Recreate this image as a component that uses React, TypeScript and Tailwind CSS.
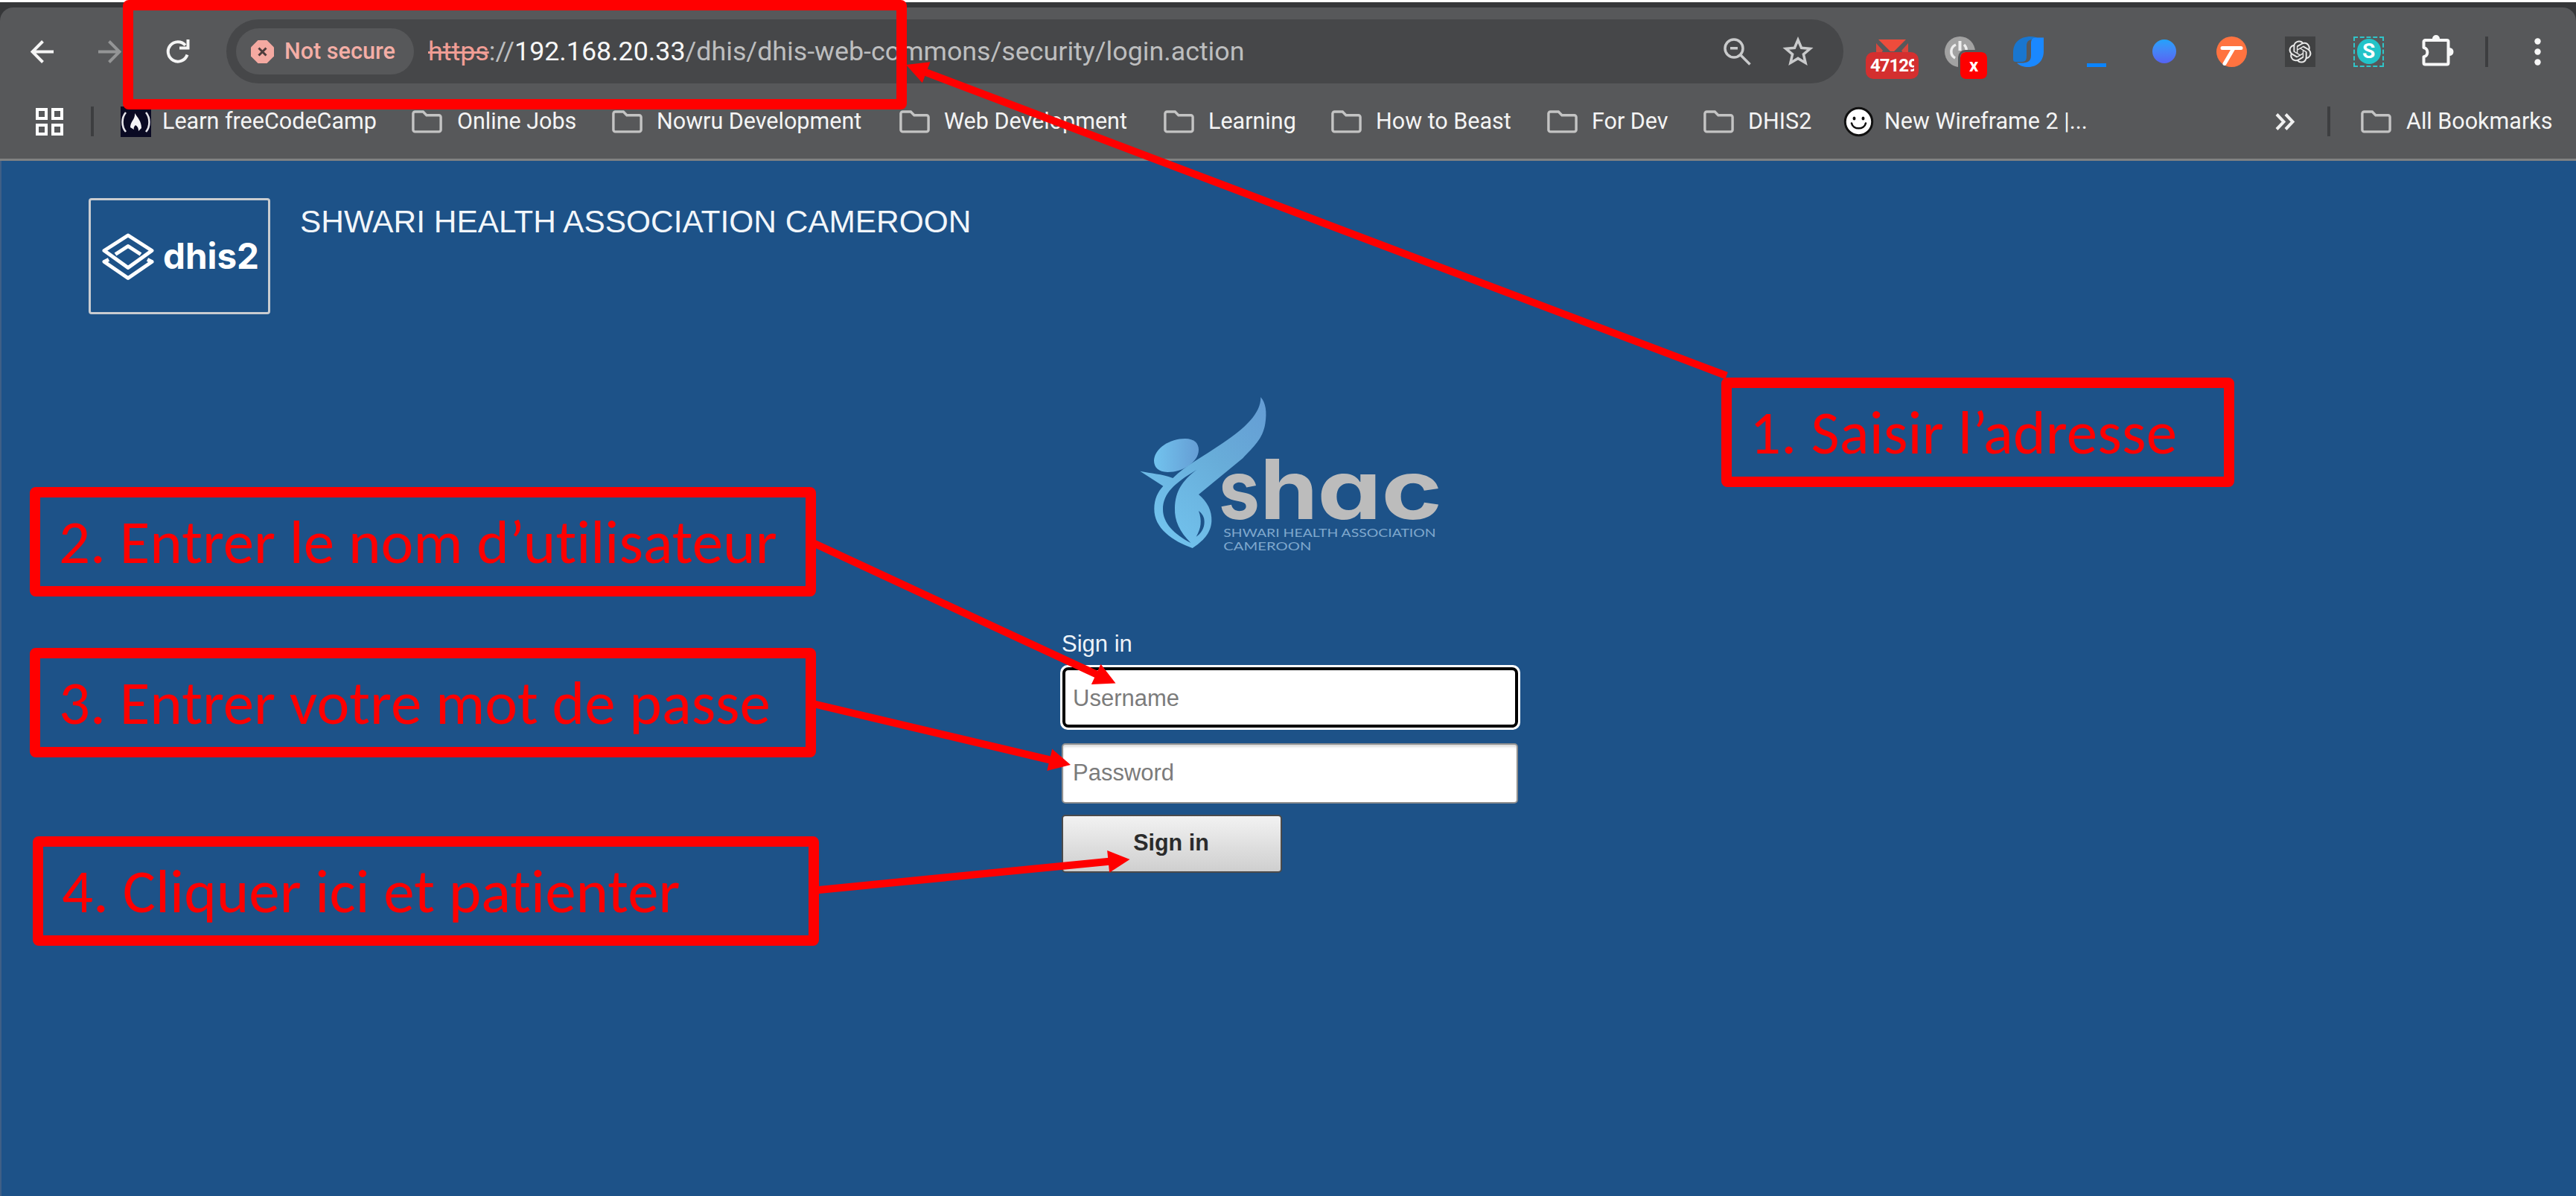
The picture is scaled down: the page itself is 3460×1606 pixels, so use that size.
import type { ReactNode } from "react";

const ROBOTO = "font-['Roboto',sans-serif]";
const ARIAL = "font-['Liberation_Sans',Arial,sans-serif]";

function FolderIcon() {
  return (
    <svg className="h-[31px] w-[41px] shrink-0" viewBox="0 0 41 31" fill="none">
      <path
        d="M4.5 2h10.8l4.6 4.7h16.6a2.6 2.6 0 0 1 2.6 2.6v17a2.6 2.6 0 0 1-2.6 2.6h-32a2.6 2.6 0 0 1-2.6-2.6V4.6A2.6 2.6 0 0 1 4.5 2Z"
        stroke="#c4c4c4"
        strokeWidth="3.4"
      />
    </svg>
  );
}

function CampIcon() {
  return (
    <svg className="h-[41px] w-[41px] shrink-0" viewBox="0 0 41 41" fill="none">
      <rect width="41" height="41" fill="#0a0a23" />
      <path d="M7 8C1 15 1 27 7 34M34 8c6 7 6 19 0 26" stroke="#e6e6ea" strokeWidth="2.6" />
      <path d="M19 9c4 6 9 11 9 20l-4 4c0-4-1-6-4-8-2 2-3 4-2 6l-5-3c0-8 7-11 6-19Z" fill="#f4f4f6" />
    </svg>
  );
}

function SmileyIcon() {
  return (
    <svg className="h-[41px] w-[41px] shrink-0" viewBox="0 0 41 41" fill="none">
      <circle cx="20.500" cy="20.500" r="18.200" fill="#fff" stroke="#111" strokeWidth="3" />
      <ellipse cx="14.500" cy="16" rx="2" ry="2.600" fill="#111" />
      <ellipse cx="26.500" cy="16" rx="2" ry="2.600" fill="#111" />
      <path d="M11 22.500c2 9 17 9 19 0" stroke="#111" strokeWidth="2.600" strokeLinecap="round" />
    </svg>
  );
}

function AppsGridIcon() {
  return (
    <svg className="h-[37px] w-[37px]" viewBox="0 0 37 37" fill="none" stroke="#fff" strokeWidth="4">
      <rect x="2" y="2" width="12" height="12" />
      <rect x="23" y="2" width="12" height="12" />
      <rect x="2" y="23" width="12" height="12" />
      <rect x="23" y="23" width="12" height="12" />
    </svg>
  );
}

function Bookmark({ icon, children, className }: { icon: ReactNode; children: ReactNode; className: string }) {
  return (
    <div className={`flex shrink-0 items-center whitespace-nowrap ${className}`}>
      {icon}
      <span>{children}</span>
    </div>
  );
}

function Toolbar() {
  return (
    <div className="flex h-[118px] items-center pl-[41px]">
      <svg className="h-[31px] w-[31px]" viewBox="0 0 31 31" fill="none" stroke="#f5f5f5" strokeWidth="4">
        <path d="M31 15.500H3.500M16.500 1.500l-14 14 14 14" />
      </svg>
      <svg className="ml-[60px] h-[31px] w-[31px]" viewBox="0 0 31 31" fill="none" stroke="#949596" strokeWidth="4">
        <path d="M0 15.500h27.500M14.500 1.500l14 14-14 14" />
      </svg>
      <svg className="ml-[60px] h-[32px] w-[32px]" viewBox="0 0 32 32" fill="none">
        <path d="M28.500 20.500A13.200 13.200 0 1 1 26 7.800" stroke="#f5f5f5" strokeWidth="4" />
        <path d="M31.500 0v13.500H18v-4h9.500V0Z" fill="#f5f5f5" />
      </svg>

      <div className="ml-[49px] flex h-[86px] w-[2172px] shrink-0 items-center rounded-full bg-[#464749] pl-[13px]">
        <div className="flex h-[62px] w-[239px] items-center gap-[14px] rounded-full bg-[#57585a] pl-[20px]">
          <svg className="h-[31px] w-[31px]" viewBox="0 0 31 31">
            <path d="M9.500 0h12L31 9.500v12L21.500 31h-12L0 21.500v-12Z" fill="#f4a9a1" />
            <path d="M10.500 10.500l10 10M20.500 10.500l-10 10" stroke="#4d3b3b" strokeWidth="3" />
          </svg>
          <span className="mt-px whitespace-nowrap text-[30.600px] font-medium leading-none text-[#f4aea6]">
            Not secure
          </span>
        </div>
        <div className="ml-[19px] mt-px flex whitespace-nowrap text-[35.800px] leading-none text-[#bdbebf]">
          <span className="text-[#f09d95] line-through decoration-[3px]">https</span>
          <span>://</span>
          <span className="text-[#f7f7f7]">192.168.20.33</span>
          <span>/dhis/dhis-web-commons/security/login.action</span>
        </div>
        <svg className="ml-auto h-[37px] w-[37px]" viewBox="0 0 37 37" fill="none" stroke="#c9cacb" strokeWidth="3.500">
          <circle cx="14" cy="14" r="12" />
          <path d="M22.500 22.500l13 13M9 13.800h10" />
        </svg>
        <svg className="ml-[42px] mr-[40px] h-[40px] w-[42px]" viewBox="0 0 42 40" fill="none">
          <path
            d="M21 4.500l4.600 10.800 11.700 1-8.900 7.700 2.700 11.400L21 29.400l-10.100 6 2.700-11.400-8.900-7.700 11.700-1Z"
            stroke="#c9cacb"
            strokeWidth="3.500"
          />
        </svg>
      </div>

      <Extensions />
    </div>
  );
}

function Extensions() {
  return (
    <div className="flex h-full items-center">
      <div className="relative ml-[44px] h-[41px] w-[41px]">
        <svg className="mt-[4px] h-[18px] w-[43px]" viewBox="0 0 43 18">
          <path d="M0 5l9 10-2 3H0ZM43 5L34 15l2 3h7Z" fill="#d9463b" />
          <path d="M3 0h37L24 16h-5Z" fill="#ee4c3c" />
        </svg>
        <div className="absolute -left-[14px] top-[21px] flex h-[36px] w-[71px] items-center overflow-hidden rounded-[10px] bg-[#d42f2f] px-[6px]">
          <span className="w-[59px] overflow-hidden text-[24px] font-bold leading-[30px] tracking-[-1px] text-white">
            47129
          </span>
        </div>
      </div>

      <div className="relative ml-[51px] h-[41px] w-[41px]">
        <svg className="h-[41px] w-[41px]" viewBox="0 0 41 41" fill="none">
          <circle cx="20.500" cy="20.500" r="20.500" fill="#a2a2a2" />
          <path d="M20.500 6v13" stroke="#eee" strokeWidth="4" />
          <path d="M15 11a10 10 0 0 0-1 18M26 11a10 10 0 0 1 3 9" stroke="#eee" strokeWidth="3.500" />
        </svg>
        <div className="absolute left-[18px] top-[18px] box-content flex h-[36px] w-[36px] items-center justify-center rounded-[10px] border-[3px] border-[#57585a] bg-[#ff0000] bg-clip-padding text-[24px] font-bold leading-none text-white">
          x
        </div>
      </div>

      <svg className="ml-[51px] h-[41px] w-[41px]" viewBox="0 0 41 41">
        <path d="M24 0C8 0 0 9 0 21v9c0 3 1 4 4 4h8c5 0 6-3 6-8V13C18 6 21 4 28 4h7C32 1 29 0 24 0Z" fill="#1976cf" />
        <path d="M41 1.500h-11c-4 0-6 3-6 7v17c0 8-5 10-13 10H5c4 4 9 5.500 15 5.500 13 0 21-9 21-21Z" fill="#1a88ff" />
      </svg>

      <div className="ml-[58px] mt-[36px] h-[5px] w-[26px] bg-[#0a84ff]" />
      <div className="ml-[62px] h-[32px] w-[32px] rounded-full bg-linear-to-b from-[#1fa2fb] to-[#5562f2]" />

      <svg className="ml-[54px] h-[41px] w-[41px]" viewBox="0 0 41 41" fill="none">
        <circle cx="20.500" cy="20.500" r="20.500" fill="#ff7340" />
        <path d="M8 15.500h25M23 16L11 36.500" stroke="#fff" strokeWidth="5" strokeLinecap="round" />
      </svg>

      <svg className="ml-[51px] h-[41px] w-[41px]" viewBox="0 0 41 41" fill="none">
        <rect width="41" height="41" fill="#404142" />
        <g transform="translate(5.500 5.500) scale(1.250)" fill="#e8e8e8">
          <path d="M22.282 9.821a5.985 5.985 0 0 0-.516-4.910 6.046 6.046 0 0 0-6.510-2.900A6.065 6.065 0 0 0 4.981 4.182a5.985 5.985 0 0 0-3.998 2.900 6.046 6.046 0 0 0 .743 7.097 5.980 5.980 0 0 0 .511 4.911 6.051 6.051 0 0 0 6.515 2.900A5.985 5.985 0 0 0 13.260 24a6.056 6.056 0 0 0 5.772-4.206 5.990 5.990 0 0 0 3.998-2.900 6.056 6.056 0 0 0-.748-7.073zM13.260 22.430a4.476 4.476 0 0 1-2.876-1.041l.141-.081 4.779-2.758a.795.795 0 0 0 .393-.681v-6.737l2.020 1.169a.071.071 0 0 1 .038.052v5.583a4.504 4.504 0 0 1-4.495 4.494zM3.600 18.304a4.471 4.471 0 0 1-.535-3.014l.142.085 4.783 2.759a.771.771 0 0 0 .780 0l5.843-3.369v2.332a.080.080 0 0 1-.033.062L9.740 19.950a4.499 4.499 0 0 1-6.140-1.646zM2.341 7.896a4.485 4.485 0 0 1 2.366-1.973V11.600a.766.766 0 0 0 .388.677l5.815 3.354-2.020 1.169a.076.076 0 0 1-.071 0l-4.830-2.787A4.504 4.504 0 0 1 2.341 7.872zm16.597 3.855l-5.833-3.387L15.119 7.200a.076.076 0 0 1 .071 0l4.830 2.791a4.494 4.494 0 0 1-.677 8.105v-5.678a.790.790 0 0 0-.405-.667zm2.010-3.023l-.141-.085-4.774-2.782a.776.776 0 0 0-.785 0L9.409 9.230V6.897a.066.066 0 0 1 .028-.061l4.830-2.787a4.499 4.499 0 0 1 6.680 4.660zM8.307 12.863l-2.020-1.164a.080.080 0 0 1-.038-.057V6.074a4.499 4.499 0 0 1 7.376-3.454l-.142.081L8.704 5.460a.795.795 0 0 0-.393.681zm1.097-2.365l2.602-1.500 2.607 1.500v2.999l-2.598 1.500-2.606-1.500z" />
        </g>
      </svg>

      <div className="ml-[51px] flex h-[41px] w-[41px] items-center justify-center border-2 border-dashed border-[#2fc4c8]">
        <div className="flex h-[34px] w-[32px] shrink-0 items-center justify-center rounded-full bg-[#22c3c8] text-[28px] font-bold leading-none text-white">
          S
        </div>
      </div>

      <svg className="-mt-[4px] ml-[51px] h-[43px] w-[43px]" viewBox="0 0 43 43" fill="none">
        <path
          d="M4.500 8H33.500a2 2 0 0 1 2 2V38.500a2 2 0 0 1-2 2H4.500a2 2 0 0 1-2-2v-8.200c6.500-1 6.500-11.400 0-12.400V10a2 2 0 0 1 2-2Z"
          stroke="#f7f7f7"
          strokeWidth="4"
          strokeLinejoin="round"
        />
        <path d="M14 8v-2a5 5 0 0 1 10 0v2ZM35.500 18h1.500a5.200 5.200 0 0 1 0 11h-1.500Z" fill="#f7f7f7" />
      </svg>

      <div className="ml-[42px] h-[41px] w-[4px] bg-[#3d3e40]" />
      <svg className="ml-[62px] h-[37px] w-[9px]" viewBox="0 0 9 37" fill="#f7f7f7">
        <circle cx="4.500" cy="4.500" r="4.200" />
        <circle cx="4.500" cy="18.500" r="4.200" />
        <circle cx="4.500" cy="32.500" r="4.200" />
      </svg>
    </div>
  );
}

function BookmarksBar() {
  return (
    <div className="flex h-[70px] items-center pl-[48px] text-[30.500px] leading-none text-[#f4f4f4]">
      <AppsGridIcon />
      <div className="ml-[37px] h-[40px] w-[4px] shrink-0 bg-[#3d3e40]" />
      <Bookmark className="ml-[36px] w-[391px] gap-[15px]" icon={<CampIcon />}>Learn freeCodeCamp</Bookmark>
      <Bookmark className="w-[269px] gap-[20px]" icon={<FolderIcon />}>Online Jobs</Bookmark>
      <Bookmark className="w-[386px] gap-[19px]" icon={<FolderIcon />}>Nowru Development</Bookmark>
      <Bookmark className="w-[355px] gap-[19px]" icon={<FolderIcon />}>Web Development</Bookmark>
      <Bookmark className="w-[225px] gap-[19px]" icon={<FolderIcon />}>Learning</Bookmark>
      <Bookmark className="w-[290px] gap-[19px]" icon={<FolderIcon />}>How to Beast</Bookmark>
      <Bookmark className="w-[210px] gap-[19px]" icon={<FolderIcon />}>For Dev</Bookmark>
      <Bookmark className="w-[188px] gap-[19px]" icon={<FolderIcon />}>DHIS2</Bookmark>
      <Bookmark className="w-[580px] gap-[14px]" icon={<SmileyIcon />}>New Wireframe 2 |...</Bookmark>
      <svg className="h-[23px] w-[27px]" viewBox="0 0 27 23" fill="none" stroke="#f0f0f0" strokeWidth="4">
        <path d="M2 1.500l9.500 10L2 21.500M14 1.500l9.500 10-9.500 10" />
      </svg>
      <div className="ml-[43px] mr-[41px] h-[40px] w-[4px] shrink-0 bg-[#3d3e40]" />
      <Bookmark className="gap-[20px]" icon={<FolderIcon />}>All Bookmarks</Bookmark>
    </div>
  );
}

function DhisLogo() {
  return (
    <div className="flex h-[156px] w-[244px] items-center rounded-[4px] border-[3px] border-[#c9ccd0] pl-[15px]">
      <svg className="mt-px h-[64px] w-[70px]" viewBox="0 0 70 64" fill="none" stroke="#fff" strokeWidth="5" strokeLinejoin="round">
        <path d="M35 3L67 23.500 35 46.500 3 23.500Z" />
        <path d="M18 28.500L35 17.500l17 11" />
        <path d="M9 35.500l-6 3L35 60.500l32-22-6-3" />
      </svg>
      <svg className="ml-[12px] h-[60px] w-[132px]" viewBox="0 0 132 60">
        <text
          x="0"
          y="46.500"
          textLength="129"
          lengthAdjust="spacingAndGlyphs"
          fill="#fff"
          className="font-['Inter',sans-serif] text-[48px] font-bold"
        >
          dhis2
        </text>
      </svg>
    </div>
  );
}

function ShacLogo() {
  return (
    <svg className="ml-[1500px] mt-[88px] h-[250px] w-[460px]" viewBox="0 0 1380 750">
      <defs>
        <linearGradient id="wing" x1="150" y1="600" x2="620" y2="120" gradientUnits="userSpaceOnUse">
          <stop offset="0" stopColor="#72c3ee" />
          <stop offset="0.550" stopColor="#68add9" />
          <stop offset="1" stopColor="#659dd4" />
        </linearGradient>
        <linearGradient id="head" x1="150" y1="0" x2="330" y2="0" gradientUnits="userSpaceOnUse">
          <stop offset="0" stopColor="#72c3ee" />
          <stop offset="1" stopColor="#659dd4" />
        </linearGradient>
      </defs>
      <path d="M150 325c2-50 65-88 125-88 38 0 55 20 55 45 0 50-65 90-125 90-38 0-55-20-55-47Z" fill="url(#head)" />
      <path
        d="M580 70c20 22 26 60 18 108-10 60-45 90-90 138L330 462c35 30 54 65 52 108-3 50-35 80-77 108-80-28-155-80-154-158 0-40 15-70 36-92L94 368c45 10 85 10 132 28 50-50 120-85 200-140 90-60 155-120 154-186Z"
        fill="url(#wing)"
      />
      <path d="M322 362c-90 55-136 95-136 160 0 55 45 100 112 135-45-45-66-90-64-140 2-70 30-110 88-155Z" fill="#1d5288" />
      <path d="M330 528c14 40 10 70-10 104 20-14 33-34 33-60 0-20-8-32-23-44Z" fill="#1d5288" />
      <text y="562" fill="#bcbcbc" className="font-['Inter',sans-serif] text-[332px] font-bold [font-feature-settings:'cv11'_1]">
        <tspan x="410" textLength="166" lengthAdjust="spacingAndGlyphs">s</tspan>
        <tspan x="577" textLength="234" lengthAdjust="spacingAndGlyphs">h</tspan>
        <tspan x="808" textLength="260" lengthAdjust="spacingAndGlyphs">a</tspan>
        <tspan x="1066" textLength="246" lengthAdjust="spacingAndGlyphs">c</tspan>
      </text>
      <g fill="#7fa8cd" className="font-['Lato',sans-serif] text-[48px] leading-none">
        <text x="430" y="632" textLength="856" lengthAdjust="spacingAndGlyphs">
          SHWARI HEALTH ASSOCIATION
        </text>
        <text x="430" y="687" textLength="354" lengthAdjust="spacingAndGlyphs">
          CAMEROON
        </text>
      </g>
    </svg>
  );
}

function LoginForm() {
  return (
    <form className="ml-[1424px] mt-[84px] flex w-[618px] flex-col items-start text-[31px]">
      <label className="ml-[2px] h-[40px] leading-[42px] text-[#eef3f8]">Sign in</label>
      <div className="mt-[9px] h-[87px] w-full rounded-[10px] bg-white p-[3px]">
        <input
          className="h-full w-full rounded-[8px] border-[4.500px] border-black bg-white px-[10px] pt-[3px] leading-none outline-none placeholder:text-[#7b7b7b]"
          placeholder="Username"
        />
      </div>
      <input
        className="ml-[2px] mt-[18px] h-[81px] w-[613px] rounded-[5px] border-2 border-[#8f8f8f] bg-white px-[13px] pb-[2px] leading-none shadow-[inset_0_3px_3px_#ddd] outline-none placeholder:text-[#7b7b7b]"
        placeholder="Password"
      />
      <button
        type="button"
        className="ml-[2px] mt-[15px] h-[78px] w-[296px] rounded-[5px] border-2 border-[#4a4a4a] bg-linear-to-b from-[#f2f2f2] to-[#cfcfcf] pb-[4px] pr-[2px] text-[30.500px] font-bold leading-none text-[#2b2b2b]"
      >
        Sign in
      </button>
    </form>
  );
}

function Callout({ className, children }: { className: string; children?: ReactNode }) {
  return (
    <div
      className={`absolute h-[147px] whitespace-nowrap rounded-[8px] border-[14px] border-[#ff0000] font-['Carlito','Calibri','Lato',sans-serif] text-[83px] leading-[119px] text-[#ff0000] [font-variant-ligatures:none] ${className}`}
    >
      {children}
    </div>
  );
}

type Line = [x1: number, y1: number, x2: number, y2: number];

const ARROWS: Line[] = [
  [2319, 504.5, 1217, 87],
  [1090, 728, 1498.5, 917.5],
  [1090, 944.5, 1438, 1027],
  [1095, 1195.5, 1517.5, 1154],
];

function Arrow({ line: [x1, y1, x2, y2] }: { line: Line }) {
  const length = Math.hypot(x2 - x1, y2 - y1);
  const angle = (Math.atan2(y2 - y1, x2 - x1) * 180) / Math.PI;
  return (
    <g transform={`translate(${x2} ${y2}) rotate(${angle})`} fill="#ff0000">
      <rect x={-length} y="-5" width={length - 20} height="10" />
      <path d="M0 0L-29 -15V15Z" />
    </g>
  );
}

export default function App() {
  return (
    <div className="relative h-[1606px] w-[3460px] overflow-hidden bg-[#1d5288]">
      <header className={`bg-[#363739] ${ROBOTO}`}>
        <div className="h-[3px] bg-white" />
        <div className="mt-[7px] h-[206px] rounded-t-[18px] border-b-[3px] border-[#808181] bg-[#57585a]">
          <Toolbar />
          <BookmarksBar />
        </div>
      </header>

      <main className={`h-[1390px] border-l-2 border-[#3f5f86] ${ARIAL}`}>
        <div className="-ml-[2px]">
          <div className="flex items-start pl-[119px] pt-[50px]">
            <DhisLogo />
            <h1 className="ml-[40px] mt-[8px] whitespace-nowrap text-[42.400px] leading-[48px] text-[#f2f6fa]">
              SHWARI HEALTH ASSOCIATION CAMEROON
            </h1>
          </div>
          <ShacLogo />
          <LoginForm />
        </div>
      </main>

      <Callout className="left-[165px] top-0 w-[1053px]" />
      <Callout className="left-[2312px] top-[507px] w-[689px] pl-[24px] tracking-[0.200px]">1. Saisir l’adresse</Callout>
      <Callout className="left-[40px] top-[654px] w-[1056px] pl-[25px]">2. Entrer le nom d’utilisateur</Callout>
      <Callout className="left-[40px] top-[870px] w-[1056px] pl-[25px]">3. Entrer votre mot de passe</Callout>
      <Callout className="left-[44px] top-[1123px] w-[1056px] pl-[25px]">4. Cliquer ici et patienter</Callout>
      <svg className="pointer-events-none absolute inset-0 h-[1606px] w-[3460px]" viewBox="0 0 3460 1606">
        {ARROWS.map((line, i) => (
          <Arrow key={i} line={line} />
        ))}
      </svg>
    </div>
  );
}
